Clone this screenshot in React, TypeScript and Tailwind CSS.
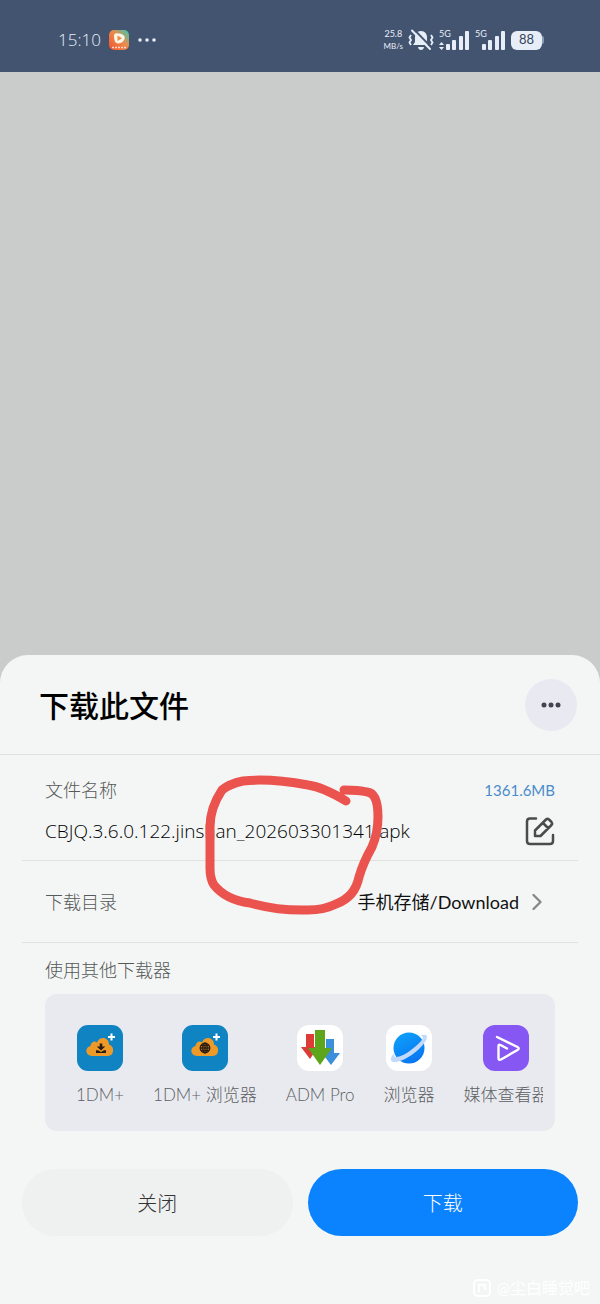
import { useState } from 'react';
import type { ReactNode } from 'react';
import { ChevronRight } from 'lucide-react';

function StatusBar() {
    return (
        <header className="flex h-18 items-center justify-between bg-[#435471] pt-2 pr-14 pl-[58px] text-[#e8eef8]">
            <div className="flex items-center gap-2">
                <span className="font-['Open_Sans'] text-[17px] font-light">
                    15:10
                </span>
                <svg viewBox="0 0 20 20" className="h-5 w-5">
                    <defs>
                        <linearGradient id="video" x1="0" y1="1" x2="1" y2="0">
                            <stop offset="0" stopColor="#f0522c" />
                            <stop offset="0.55" stopColor="#ef8a4a" />
                            <stop offset="1" stopColor="#2fcdb4" />
                        </linearGradient>
                    </defs>
                    <rect width="20" height="20" rx="5" fill="url(#video)" />
                    <path
                        d="M5 7Q4.500 3 8 3.200Q16 4 15.800 7.800Q15 13 9 13.500Q5.500 13.500 5 7z"
                        fill="#fdf6e6"
                    />
                    <path d="M8.500 5.500l4.500 2.700l-4.500 2.800z" fill="#ec8a45" />
                    <path
                        d="M3 17.500h14"
                        stroke="#fbd9cc"
                        strokeWidth="1.500"
                        strokeDasharray="2 1"
                    />
                </svg>
                <svg viewBox="0 0 20 6" className="h-1.5 w-5" fill="currentColor">
                    <circle cx="3" cy="3" r="1.800" />
                    <circle cx="10" cy="3" r="1.800" />
                    <circle cx="17" cy="3" r="1.800" />
                </svg>
            </div>
            <div className="flex items-center gap-[5px]">
                <div className="text-center text-[9px] leading-3">
                    <p>25.8</p>
                    <p className="text-[8px]">MB/s</p>
                </div>
                <MuteIcon />
                <Signal withArrows />
                <Signal />
                <div className="flex items-center">
                    <span className="flex h-[19px] w-[31px] items-center justify-center rounded-md bg-[#e8eef8] text-[13px] text-[#34435c]">
                        88
                    </span>
                    <span className="h-2 w-0.5 rounded-r bg-[#8a9ab4]" />
                </div>
            </div>
        </header>
    );
}

function MuteIcon() {
    return (
        <svg viewBox="0 0 26 22" className="h-[22px] w-[26px]" fill="none">
            <path
                d="M13 2c-4 0-6 3-6 6.500V13l-2 3h16l-2-3V8.500C19 5 17 2 13 2z"
                fill="currentColor"
            />
            <path d="M10 18h6q-.5 3-3 3t-3-3z" fill="currentColor" />
            <path
                d="M3 6L1.500 8.500L3 11l-1.500 2.500L3 16M23 6l1.500 2.500L23 11l1.500 2.500L23 16"
                stroke="currentColor"
                strokeWidth="1.800"
            />
            <path d="M6 .5L24 19" stroke="#435471" strokeWidth="2" />
            <path
                d="M4 1.500L22 20"
                stroke="currentColor"
                strokeWidth="2"
                strokeLinecap="round"
            />
        </svg>
    );
}

function Signal({ withArrows = false }: { withArrows?: boolean }) {
    return (
        <svg viewBox="0 0 31 22" className="h-[22px] w-[31px]" fill="currentColor">
            <text x="0" y="8" fontSize="9" fontFamily="Lato, sans-serif">
                5G
            </text>
            {withArrows && <path d="M0 16l2.500-3L5 16zM0 18h5l-2.500 3z" />}
            <rect x="7" y="15" width="4" height="6" rx="1" />
            <rect x="13" y="11" width="4" height="10" rx="1" />
            <rect x="20" y="7" width="4" height="14" rx="1" />
            <rect x="26" y="2" width="4" height="19" rx="1" />
        </svg>
    );
}

/* Iconos de las apps */
function CloudIcon({ children }: { children: ReactNode }) {
    return (
        <svg viewBox="0 0 46 46" className="h-[46px] w-[46px]">
            <rect width="46" height="46" rx="11" fill="#1083c3" />
            <path
                d="M15 31c-7 0-7.500-9-1.500-10c.5-4 4-5.500 6.500-3.500c2.500-7 12-5.500 12 2c6 1.500 5.500 11.500-1 11.500z"
                fill="#ee9a28"
            />
            <path d="M34.500 8.500v7M31 12h7" stroke="#fff" strokeWidth="2" />
            {children}
        </svg>
    );
}

function DownloadCloudIcon() {
    return (
        <CloudIcon>
            <path
                d="M22.700 18.500h2.600v3h3l-4.300 4l-4.300-4h3zM19 25.200h2l3 1.800l3-1.800h2v2.800H19z"
                fill="#2c1c12"
            />
        </CloudIcon>
    );
}

function GlobeCloudIcon() {
    return (
        <CloudIcon>
            <g fill="none" stroke="#2c1c12" strokeWidth="1.300">
                <circle cx="23" cy="23" r="4.800" />
                <ellipse cx="23" cy="23" rx="2.200" ry="4.800" />
                <path d="M18 23h10M23 18v10M19 20.500h8M19 25.500h8" />
            </g>
        </CloudIcon>
    );
}

function AdmIcon() {
    return (
        <svg viewBox="0 0 46 46" className="h-[46px] w-[46px]">
            <rect width="46" height="46" rx="12" fill="#fff" />
            <path d="M9 9h8v13h4l-8 12l-9-12h5z" fill="#dd3b36" />
            <path d="M29 14h8v14h6l-9 12l-9-12h4z" fill="#3b8fdb" />
            <path d="M18 5h10v18h7L23 40L11 23h7z" fill="#5da51b" />
        </svg>
    );
}

function PlanetIcon() {
    return (
        <svg viewBox="0 0 46 46" className="h-[46px] w-[46px]">
            <defs>
                <linearGradient id="planet" x1="0" y1="0" x2="0.5" y2="1">
                    <stop offset="0" stopColor="#0fa4fb" />
                    <stop offset="1" stopColor="#0878f2" />
                </linearGradient>
            </defs>
            <rect width="46" height="46" rx="12" fill="#fff" />
            <circle cx="23" cy="23" r="15.500" fill="url(#planet)" />
            <path
                d="M34 11c4-2 7-1.500 7 1c0 4-6 11-14 17c-9 6.500-19 10-21.500 7c-1.500-2 0-5 3-8c-1 3-.5 4 1.500 4c4 0 10-3 15-7c6-4.500 12-10 12-12.500c0-1-1-1.500-3-1.500z"
                fill="#c3d9fb"
            />
        </svg>
    );
}

function MediaIcon() {
    return (
        <svg viewBox="0 0 46 46" className="h-[46px] w-[46px]">
            <rect width="46" height="46" rx="12" fill="#8757f4" />
            <path
                d="M14 12l20.500 10q2.500 1.500 0 3L18 34.500q-2.500 1-2.500-1.500V21q0-2 2-1l6.500 3.500"
                fill="none"
                stroke="#fff"
                strokeWidth="2.400"
                strokeLinecap="round"
                strokeLinejoin="round"
            />
        </svg>
    );
}

const downloaders = [
    { name: '1DM+', icon: <DownloadCloudIcon /> },
    { name: '1DM+ 浏览器', icon: <GlobeCloudIcon /> },
    { name: 'ADM Pro', icon: <AdmIcon /> },
    { name: '浏览器', icon: <PlanetIcon /> },
    { name: '媒体查看器', icon: <MediaIcon /> },
];

export default function App() {
    const [open, setOpen] = useState(true);

    return (
        <div className="flex min-h-screen flex-col bg-[#cacccb] font-[Lato,'Noto_Sans_CJK_SC',sans-serif]">
            <StatusBar />
            <main className="flex flex-1 flex-col justify-end">
                {open && (
                    <section className="rounded-t-[28px] bg-[#f4f6f5] pb-2.5">
                        {/* Header */}
                        <div className="flex h-25 items-center justify-between border-b border-[#dfe2e1] pr-[23px] pl-[39px]">
                            <h1 className="text-3xl font-medium text-black">
                                下载此文件
                            </h1>
                            <button
                                aria-label="更多"
                                className="flex h-[52px] w-[52px] items-center justify-center rounded-full bg-[#e9eaf1]"
                            >
                                <svg
                                    viewBox="0 0 20 6"
                                    className="h-1.5 w-5"
                                    fill="#42454f"
                                >
                                    <circle cx="3" cy="3" r="2.500" />
                                    <circle cx="10" cy="3" r="2.500" />
                                    <circle cx="17" cy="3" r="2.500" />
                                </svg>
                            </button>
                        </div>

                        <div className="px-[22px]">
                            {/* Archivo */}
                            <div className="relative h-[106px] border-b border-[#dfe2e1] px-[23px] pt-[21px]">
                                <div className="flex items-center justify-between text-lg leading-7 font-light">
                                    <span className="text-[#555958]">
                                        文件名称
                                    </span>
                                    <span className="text-[15px] font-normal text-[#4a8cc9]">
                                        1361.6MB
                                    </span>
                                </div>
                                <div className="mt-3 flex items-center justify-between">
                                    <span className="font-['Open_Sans'] text-[19px] leading-7 font-light text-black">
                                        CBJQ.3.6.0.122.jinshan_202603301341.apk
                                    </span>
                                    <button aria-label="编辑文件名">
                                        <svg
                                            viewBox="0 0 30 30"
                                            className="h-[30px] w-[30px]"
                                            fill="none"
                                            stroke="#4a4c4b"
                                            strokeWidth="2.500"
                                            strokeLinecap="round"
                                            strokeLinejoin="round"
                                        >
                                            <path d="M11 2.500H5Q2 2.500 2 5.500V25q0 3 3 3h20q3 0 3-3v-6" />
                                            <path d="M10 20v-5.500L21 3.500q1.500-1.200 3 0l2.500 2.500q1.200 1.500 0 3L15.500 20zM18 7l5 5" />
                                        </svg>
                                    </button>
                                </div>
                                <svg
                                    viewBox="0 0 180 140"
                                    className="pointer-events-none absolute top-5 left-[182px] h-[140px] w-[180px]"
                                    fill="none"
                                    stroke="#eb534f"
                                    strokeWidth="9"
                                    strokeLinecap="round"
                                    strokeLinejoin="round"
                                >
                                    <path d="M142 26Q119 12 104 10Q65 3 39 6Q25 9 18 15Q6 33 6 52L6 93Q6 104 10 110Q22 125 46 128Q75 136 104 135Q120 135 132 129Q151 122 155 102Q159 88 168 72Q174 58 174 42Q174 18 163 17Q155 15 140 15" />
                                </svg>
                            </div>

                            {/* Carpeta */}
                            <div className="flex h-[82px] items-center justify-between border-b border-[#dfe2e1] px-[23px] text-lg">
                                <span className="font-light text-[#555958]">
                                    下载目录
                                </span>
                                <button className="flex items-center gap-1 pr-1 text-[#111]">
                                    手机存储/Download
                                    <ChevronRight
                                        size={28}
                                        className="text-[#85888a]"
                                    />
                                </button>
                            </div>

                            {/* Otras apps */}
                            <div className="px-[23px] pt-[13px]">
                                <h2 className="text-lg leading-7 font-light text-[#555958]">
                                    使用其他下载器
                                </h2>
                                <div className="mt-2.5 rounded-xl bg-[#e9eaef] px-3 pt-[31px] pb-6">
                                    <div className="flex gap-[29px] overflow-x-auto pl-[19px] [scrollbar-width:none]">
                                        {downloaders.map((app) => (
                                            <button
                                                key={app.name}
                                                className="flex shrink-0 flex-col items-center gap-3 text-[17px] leading-6 font-light text-[#5c5f63]"
                                            >
                                                {app.icon}
                                                {app.name}
                                            </button>
                                        ))}
                                    </div>
                                </div>
                            </div>

                            <div className="mt-[38px] grid grid-cols-2 gap-[15px] text-xl font-light">
                                <button
                                    onClick={() => setOpen(false)}
                                    className="h-[67px] rounded-full bg-[#eff0f0] text-[#333]"
                                >
                                    关闭
                                </button>
                                <button className="h-[67px] rounded-full bg-[#0b83fe] text-white">
                                    下载
                                </button>
                            </div>
                        </div>

                        <div className="mt-[46px] flex h-3 items-center justify-end gap-1.5 pr-2.5 text-base text-white">
                            <svg
                                viewBox="0 0 18 18"
                                className="h-[18px] w-[18px]"
                                fill="none"
                                stroke="#fff"
                                strokeWidth="2"
                            >
                                <rect x="1" y="1" width="16" height="16" rx="4" />
                                <path d="M6 13V6h6v5" />
                            </svg>
                            @尘白睡觉吧
                        </div>
                    </section>
                )}
            </main>
        </div>
    );
}
